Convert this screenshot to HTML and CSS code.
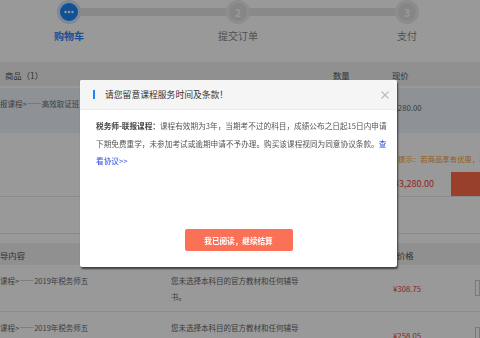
FILE: index.html
```html
<!DOCTYPE html>
<html lang="zh-CN">
<head>
  <meta charset="UTF-8" />
  <meta name="viewport" content="width=device-width, initial-scale=1.0"/>
  <title>购物车</title>
  <link rel="stylesheet" href="styles.css">
</head>
<body>
  <div class="page">
    <div class="steps">
      <div class="step active">
        <div class="step-dot">
          <svg width="10" height="4" viewBox="0 0 10 4"><circle cx="1.5" cy="2" r="1.2" fill="#fff"/><circle cx="5" cy="2" r="1.2" fill="#fff"/><circle cx="8.5" cy="2" r="1.2" fill="#fff"/></svg>
        </div>
        <div class="step-label">购物车</div>
      </div>
      <div class="step">
        <div class="step-dot">2</div>
        <div class="step-label">提交订单</div>
      </div>
      <div class="step">
        <div class="step-dot">3</div>
        <div class="step-label">支付</div>
      </div>
    </div>

    <div class="cart-head">
      <span class="col-name">商品（1）</span>
      <span class="col-qty">数量</span>
      <span class="col-price">现价</span>
    </div>
    <div class="cart-item">
      <span class="item-name">报课程&gt;——高效取证班</span>
      <span class="item-price">¥3,280.00</span>
    </div>
    <div class="cart-foot">
      <p class="tip">提示：若商品享有优惠，相应</p>
      <div class="total-row">
        <span class="total">¥3,280.00</span>
        <span class="pay-btn"></span>
      </div>
    </div>

    <div class="gift-table">
      <div class="gift-head">
        <span class="g-name">导内容</span>
        <span class="g-desc"></span>
        <span class="g-price">价格</span>
      </div>
      <div class="gift-row">
        <span class="g-name">课程&gt;——2019年税务师五</span>
        <span class="g-desc">您未选择本科目的官方教材和任何辅导书。</span>
        <span class="g-price red">¥308.75</span>
        <span class="g-check"></span>
      </div>
      <div class="gift-row">
        <span class="g-name">课程&gt;——2019年税务师五</span>
        <span class="g-desc">您未选择本科目的官方教材和任何辅导书。</span>
        <span class="g-price red">¥258.05</span>
        <span class="g-check"></span>
      </div>
    </div>
  </div>

  <div class="overlay">
    <div class="modal">
      <div class="modal-head">
        <span class="head-bar"></span>
        <span class="modal-title">请您留意课程服务时间及条款！</span>
        <svg class="close" width="8" height="8" viewBox="0 0 8 8"><path d="M0.5 0.5L7.5 7.5M7.5 0.5L0.5 7.5" stroke="#bbb" stroke-width="1.1" fill="none"/></svg>
      </div>
      <div class="modal-body">
        <p><b>税务师-联报课程：</b>课程有效期为3年，当期考不过的科目，成绩公布之日起15日内申请<br>下期免费重学，未参加考试或逾期申请不予办理。购买该课程视同为同意协议条款。<a href="#">查<br>看协议&gt;&gt;</a></p>
      </div>
      <button class="confirm-btn">我已阅读，继续结算</button>
    </div>
  </div>
</body>
</html>
```

FILE: styles.css
```css
* {
  box-sizing: border-box;
  margin: 0;
  padding: 0;
  font-family: "Noto Sans CJK SC", "Noto Sans", sans-serif;
}

body {
  width: 480px;
  height: 338px;
  overflow: hidden;
  background: #fff;
  color: #666;
}

.page {
  width: 480px;
}

/* steps */
.steps {
  height: 62px;
  display: flex;
  justify-content: space-between;
  padding: 0 43px 0 39px;
  background: linear-gradient(#e4e4e4, #e4e4e4) no-repeat;
  background-size: 338px 8px;
  background-position: 69px 8px;
}

.step {
  width: 60px;
  display: flex;
  flex-direction: column;
  align-items: center;
}

.step-dot {
  width: 24px;
  height: 24px;
  border-radius: 50%;
  border: 3px solid #ececec;
  background: #e0e0e0;
  color: #fff;
  font-size: 10px;
  font-weight: bold;
  display: flex;
  align-items: center;
  justify-content: center;
}

.step.active .step-dot {
  border-color: #d3e3fb;
  background: #1f86f8;
}

.step-label {
  margin-top: 6px;
  font-size: 10px;
  line-height: 12px;
  color: #888;
  white-space: nowrap;
}

.step.active .step-label {
  color: #2f84f6;
  font-weight: bold;
}

/* cart */
.cart-head {
  height: 24px;
  background: #f0f0f0;
  display: flex;
  font-size: 8.4px;
  line-height: 18px;
  padding-top: 4px;
  color: #555;
}

.col-name {
  width: 333px;
  padding-left: 5px;
}

.col-qty {
  width: 59px;
}

.cart-item {
  margin-top: 2px;
  height: 45px;
  background: #edf4fb;
  display: flex;
  font-size: 7.5px;
  color: #666;
}

.item-name {
  width: 387px;
  padding-top: 10px;
  line-height: 12px;
}

.item-price {
  padding-top: 14px;
  line-height: 12px;
  font-size: 7.8px;
}

.cart-foot {
  height: 64px;
  border-bottom: 1px solid #e6e6e6;
  padding-top: 20px;
}

.tip {
  padding-left: 398px;
  font-size: 7.4px;
  line-height: 12px;
  color: #f59a2c;
  white-space: nowrap;
}

.total-row {
  margin-top: 7px;
  height: 24px;
  display: flex;
}

.total {
  width: 451px;
  padding-left: 394px;
  font-size: 9px;
  line-height: 24px;
  color: #f03c3c;
}

.pay-btn {
  flex: 1;
  background: #ff6c4a;
}

/* gifts */
.gift-table {
  margin-top: 36px;
  border-top: 1px solid #e6e6e6;
  padding-top: 9px;
}

.gift-head {
  height: 22px;
  background: #f0f0f0;
  display: flex;
  font-size: 8.4px;
  line-height: 22px;
  padding-top: 1px;
  color: #555;
}

.g-name {
  width: 171px;
  flex-shrink: 0;
}

.g-desc {
  width: 222px;
  flex-shrink: 0;
  padding-right: 90px;
}

.g-price {
  width: 82px;
  flex-shrink: 0;
}

.gift-head .g-price {
  padding-left: 4px;
}

.gift-row {
  height: 47px;
  border-bottom: 1px solid #e6e6e6;
  display: flex;
  font-size: 7.5px;
  line-height: 16px;
  padding-top: 8px;
}

.gift-row .g-price {
  padding-top: 8px;
  font-size: 7.8px;
}

.red {
  color: #f03c3c;
}

.g-check {
  margin-top: 7px;
  width: 20px;
  height: 16px;
  border: 1px solid #ccc;
  background: #fff;
}

/* modal */
.overlay {
  position: fixed;
  top: 0;
  left: 0;
  right: 0;
  bottom: 0;
  background: rgba(0, 0, 0, 0.4);
  padding: 80px 0 0 80px;
}

.modal {
  width: 317px;
  height: 187px;
  background: #fff;
  border-radius: 2px;
  box-shadow: 1px 2px 2px rgba(0, 0, 0, 0.6);
  display: flex;
  flex-direction: column;
}

.modal-head {
  height: 30px;
  background: #f5f5f5;
  border-bottom: 1px solid #ececec;
  border-radius: 2px 2px 0 0;
  display: flex;
  align-items: center;
  padding: 0 8px 0 13px;
}

.head-bar {
  width: 2px;
  height: 9px;
  background: #1e88f0;
}

.modal-title {
  flex: 1;
  margin-left: 10px;
  font-size: 8.8px;
  color: #333;
}

.modal-body {
  padding: 7px 8px 0 16px;
  font-size: 7.65px;
  line-height: 17.5px;
  color: #555;
  white-space: nowrap;
}

.modal-body b {
  color: #444;
}

.modal-body a {
  color: #2d4de0;
  text-decoration: none;
}

.confirm-btn {
  margin: auto auto 16px;
  width: 108px;
  height: 22px;
  border: none;
  border-radius: 2px;
  background: #fb7157;
  color: #fff;
  font-size: 7.6px;
  font-weight: bold;
  cursor: pointer;
}
```
